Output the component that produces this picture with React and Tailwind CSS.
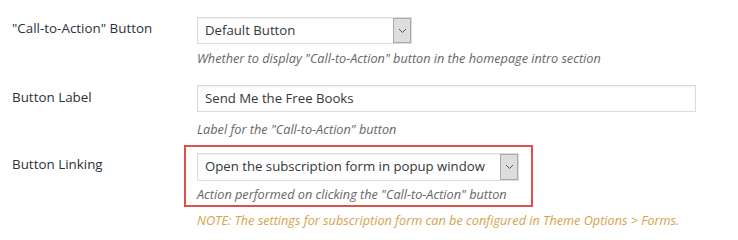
const FONT = "font-['Segoe_UI','Open_Sans','Noto_Sans',sans-serif]";

const Chevron = () => (
  <svg width="9" height="6" viewBox="0 0 9 6" fill="none">
    <path d="M1 1l3.5 3.5L8 1" stroke="#555" strokeWidth="1" />
  </svg>
);

const FakeSelect = ({ value, width, height }) => (
  <div
    className={`flex items-stretch border border-[#dcdcdc] bg-white shadow-[inset_0_1px_2px_rgba(0,0,0,0.07)] ${width} ${height}`}
  >
    <div className="flex flex-1 items-center whitespace-nowrap pl-[7px] text-[13.2px] text-[#32373c]">{value}</div>
    <div className="flex w-[18px] items-center justify-center border border-[#a9a9a9] bg-[#dddddd]">
      <Chevron />
    </div>
  </div>
);

const Help = ({ children, className = '' }) => (
  <p className={`whitespace-nowrap text-[12.7px] italic leading-[18px] text-[#666] ${className}`}>{children}</p>
);

export default function App() {
  return (
    <div className={`h-[240px] w-[738px] bg-white pt-[17px] ${FONT}`}>
      {/* Call-to-Action button */}
      <div className="flex">
        <div className="w-[184px] pl-3 pt-[1px] text-[13.4px] leading-[20px] text-[#2c3338]">"Call-to-Action" Button</div>
        <div className="pl-[13px]">
          <FakeSelect value="Default Button" width="w-[215px]" height="h-[27px]" />
          <Help className="mt-[5px]">Whether to display "Call-to-Action" button in the homepage intro section</Help>
        </div>
      </div>

      {/* Button label */}
      <div className="mt-[18px] flex">
        <div className="w-[184px] pl-3 pt-[2px] text-[13.4px] leading-[20px] text-[#2c3338]">Button Label</div>
        <div className="pl-[13px]">
          <div className="flex h-[27px] w-[499px] items-center border border-[#dcdcdc] bg-white pl-[7px] text-[13.2px] text-[#32373c] shadow-[inset_0_1px_2px_rgba(0,0,0,0.07)]">
            Send Me the Free Books
          </div>
          <Help className="mt-[8px]">Label for the "Call-to-Action" button</Help>
        </div>
      </div>

      {/* Button linking */}
      <div className="mt-[7px] flex">
        <div className="w-[184px] pl-3 pt-[9px] text-[13.4px] leading-[20px] text-[#2c3338]">Button Linking</div>
        <div>
          <div className="w-[349px] border-2 border-[#e0504a] pb-[2px] pl-[11px] pt-[6px]">
            <FakeSelect value="Open the subscription form in popup window" width="w-[322px]" height="h-[28px]" />
            <Help className="mt-[4px]">Action performed on clicking the "Call-to-Action" button</Help>
          </div>
          <p className="mt-[4px] whitespace-nowrap pl-[13px] text-[12.7px] italic leading-[18px] text-[#d6a24e]">
            NOTE: The settings for subscription form can be configured in Theme Options &gt; Forms.
          </p>
        </div>
      </div>
    </div>
  );
}
